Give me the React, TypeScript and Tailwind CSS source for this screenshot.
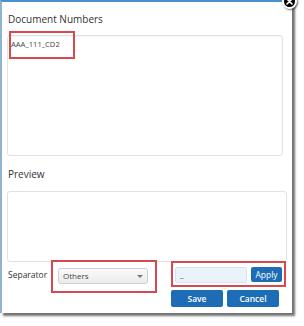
import React from "react";

export default function App() {
  const font = { fontFamily: '"Open Sans", "Noto Sans", sans-serif' };
  return (
    <div className="w-[304px] h-[326px] bg-white relative overflow-hidden" style={font}>
      <div className="relative w-[292px] h-[313px] bg-white border-t-2 border-l-2 border-t-[#4a8fcf] border-l-[#8fb4d0] shadow-[3px_3px_2px_rgba(0,0,0,0.55)] pl-[5px]">
        {/* Title */}
        <div className="mt-[11px] text-[10px] leading-[12px] text-[#333] pl-[1px]">Document Numbers</div>
        {/* Textarea 1 */}
        <div className="relative mt-[10px] w-[276px] h-[121px] border border-[#e2e2e2] rounded-[3px] shadow-[inset_0_1px_1px_rgba(0,0,0,0.04)] pt-[3px] pl-[3px] text-[7.6px] leading-[10px] text-[#444]">
          AAA_111_CD2
          <div className="absolute left-[1px] top-[-5px] w-[66px] h-[28px] border-2 border-[#d64a4f]" />
        </div>
        {/* Preview label */}
        <div className="mt-[12px] text-[10px] leading-[12px] text-[#333] pl-[1px]">Preview</div>
        {/* Preview textarea */}
        <div className="mt-[11px] w-[280px] h-[71px] border border-[#e2e2e2] rounded-[3px]" />
        {/* Bottom row */}
        <div className="flex items-start mt-[-2px]">
          <div className="w-[44px] pt-[10px] pl-[1px] text-[8.5px] leading-[10px] text-[#333]">Separator</div>
          <div className="w-[106px] h-[33px] border-2 border-[#d64a4f] pl-[5px] pt-[6px]">
            <div className="relative w-[90px] h-[16px] rounded-[3px] border border-[#cfcfcf] bg-gradient-to-b from-[#fafafa] to-[#ececec] pl-[4px] text-[8px] leading-[14px] text-[#444]">
              Others
              <div className="absolute right-[4px] top-[6px] w-0 h-0 border-l-[3px] border-r-[3px] border-t-[3px] border-l-transparent border-r-transparent border-t-[#777]" />
            </div>
          </div>
          <div className="ml-[14px] flex flex-col">
            <div className="mt-[1px] w-[115px] h-[26px] border-2 border-[#d64a4f] pl-[2px] pt-[4px] flex items-start">
              <div className="w-[72px] h-[16px] bg-[#eaf2fb] border border-[#d6e2ee] rounded-[2px] pl-[4px] text-[8px] leading-[14px] text-[#333]">_</div>
              <button className="ml-[4px] w-[31px] h-[15px] bg-[#1c6db5] rounded-[2px] text-white text-[8.5px] leading-[15px] text-center" style={font}>Apply</button>
            </div>
            <div className="flex mt-[3px]">
              <button className="w-[52px] h-[17px] bg-[#1c6db5] rounded-[2px] text-white text-[8.5px] leading-[17px] text-center font-semibold" style={font}>Save</button>
              <button className="ml-[4px] w-[52px] h-[17px] bg-[#1c6db5] rounded-[2px] text-white text-[8.5px] leading-[17px] text-center font-semibold" style={font}>Cancel</button>
            </div>
          </div>
        </div>
      </div>
      {/* Close button */}
      <div className="absolute left-[282px] top-[-6px] w-[15px] h-[15px] rounded-full bg-black border-2 border-white shadow-[1px_1px_2px_rgba(0,0,0,0.6)] flex items-center justify-center">
        <svg width="7" height="7" viewBox="0 0 7 7">
          <path d="M1 1L6 6M6 1L1 6" stroke="white" strokeWidth="1.6" strokeLinecap="round" />
        </svg>
      </div>
    </div>
  );
}
